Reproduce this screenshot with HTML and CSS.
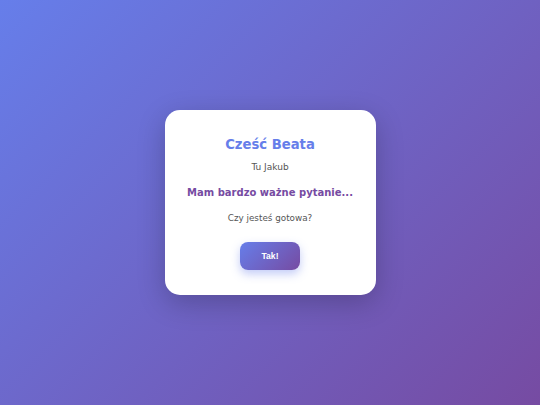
FILE: index.html
```html
<!DOCTYPE html>
<html lang="pl">
<head>
    <meta charset="UTF-8">
    <meta name="viewport" content="width=device-width, initial-scale=1.0">
    <title>Pytanie</title>
    <link rel="stylesheet" href="styles.css">
</head>
<body>
    <div class="card">
        <h1 class="title">Cześć Beata</h1>
        <p class="from">Tu Jakub</p>
        <p class="question">Mam bardzo ważne pytanie...</p>
        <p class="ask">Czy jesteś gotowa?</p>
        <button class="btn" id="yesBtn">Tak!</button>
    </div>
</body>
</html>
```

FILE: styles.css
```css
body{
    margin: 0;
    min-height: 100vh;
    display: flex;
    align-items: center;
    justify-content: center;
    font-family: "DejaVu Sans", Verdana, sans-serif;
    background: linear-gradient(135deg, #667eea 0%, #764ba2 100%);
}
.card{
    width: 211px;
    box-sizing: border-box;
    padding: 27px 20px 25px;
    background-color: #fff;
    border-radius: 15px;
    text-align: center;
    box-shadow: 0 8px 28px rgb(0 0 0 / 22%);
}
.title{
    margin: 0;
    font-size: 13.2px;
    line-height: 16px;
    font-weight: bold;
    color: #667eea;
}
.from{
    margin: 8px 0 0;
    font-size: 9px;
    line-height: 12px;
    color: #555;
}
.question{
    margin: 13px 0 0;
    font-size: 10px;
    line-height: 14px;
    font-weight: bold;
    color: #764ba2;
}
.ask{
    margin: 12px 0 0;
    font-size: 8.8px;
    line-height: 12px;
    color: #555;
}
.btn{
    margin-top: 18px;
    width: 60px;
    height: 28px;
    border: none;
    border-radius: 8px;
    cursor: pointer;
    font-family: "Liberation Sans", Arial, sans-serif;
    font-size: 8.6px;
    font-weight: bold;
    color: #fff;
    background: linear-gradient(135deg, #667eea 0%, #764ba2 100%);
    box-shadow: 0 4px 10px rgb(102 126 234 / 40%);
}
```
